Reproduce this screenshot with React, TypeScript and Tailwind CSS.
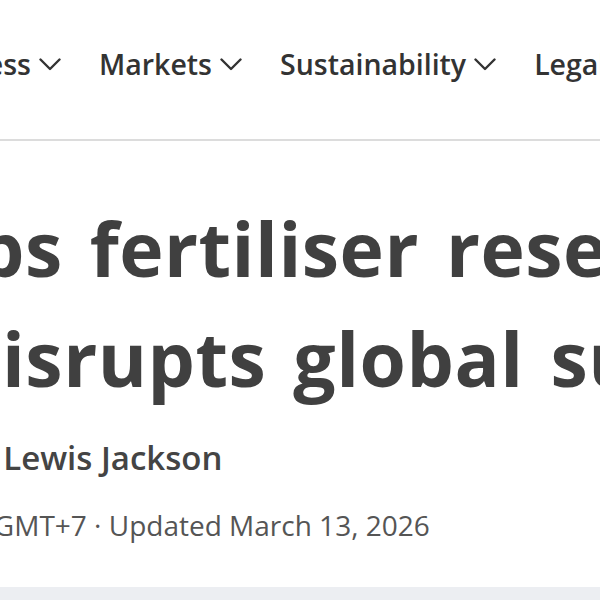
import React from 'react';

const NAV = ['Business', 'Markets', 'Sustainability', 'Legal'];

function Chevron() {
  return (
    <svg width="22" height="13" viewBox="0 0 22 13" fill="none" className="shrink-0">
      <polyline points="1.5,1.5 11,11 20.5,1.5" stroke="#333" strokeWidth="2.4" strokeLinecap="round" strokeLinejoin="round" />
    </svg>
  );
}

export default function App() {
  return (
    <div className="w-[600px] h-[600px] overflow-hidden bg-white font-['Open_Sans',sans-serif]">
      {/* top nav */}
      <nav className="pt-[44px] flex items-center whitespace-nowrap -ml-[90px] gap-[38px] text-[28.5px] leading-[40px] font-semibold text-[#333]">
        {NAV.map((item, i) => (
          <div key={item} className="flex items-center gap-[8px]">
            <span>{item}</span>
            {i < 3 && <Chevron />}
          </div>
        ))}
      </nav>
      <div className="mt-[55px] h-[2px] bg-[#dcdcdc]" />

      {/* headline */}
      <h1 className="mt-[52px] text-[75px] leading-[110px] font-bold text-[#404040] whitespace-nowrap tracking-[0.5px] [word-spacing:7px]">
        <div className="-ml-[287px]">War saps fertiliser reserves as conflict</div>
        <div className="-ml-[46px]">disrupts global supply</div>
      </h1>

      {/* byline */}
      <p className="mt-[25px] text-[33px] leading-[40px] font-semibold text-[#444] whitespace-nowrap -ml-[66px]">
        and Lewis Jackson
      </p>
      <p className="mt-[29px] text-[28px] leading-[36px] text-[#555] whitespace-nowrap -ml-[326px]">
        March 12, 2026 4:05 PM GMT+7 · Updated March 13, 2026
      </p>

      <div className="mt-[44px] h-[13px] bg-[#eceef2]" />
    </div>
  );
}
